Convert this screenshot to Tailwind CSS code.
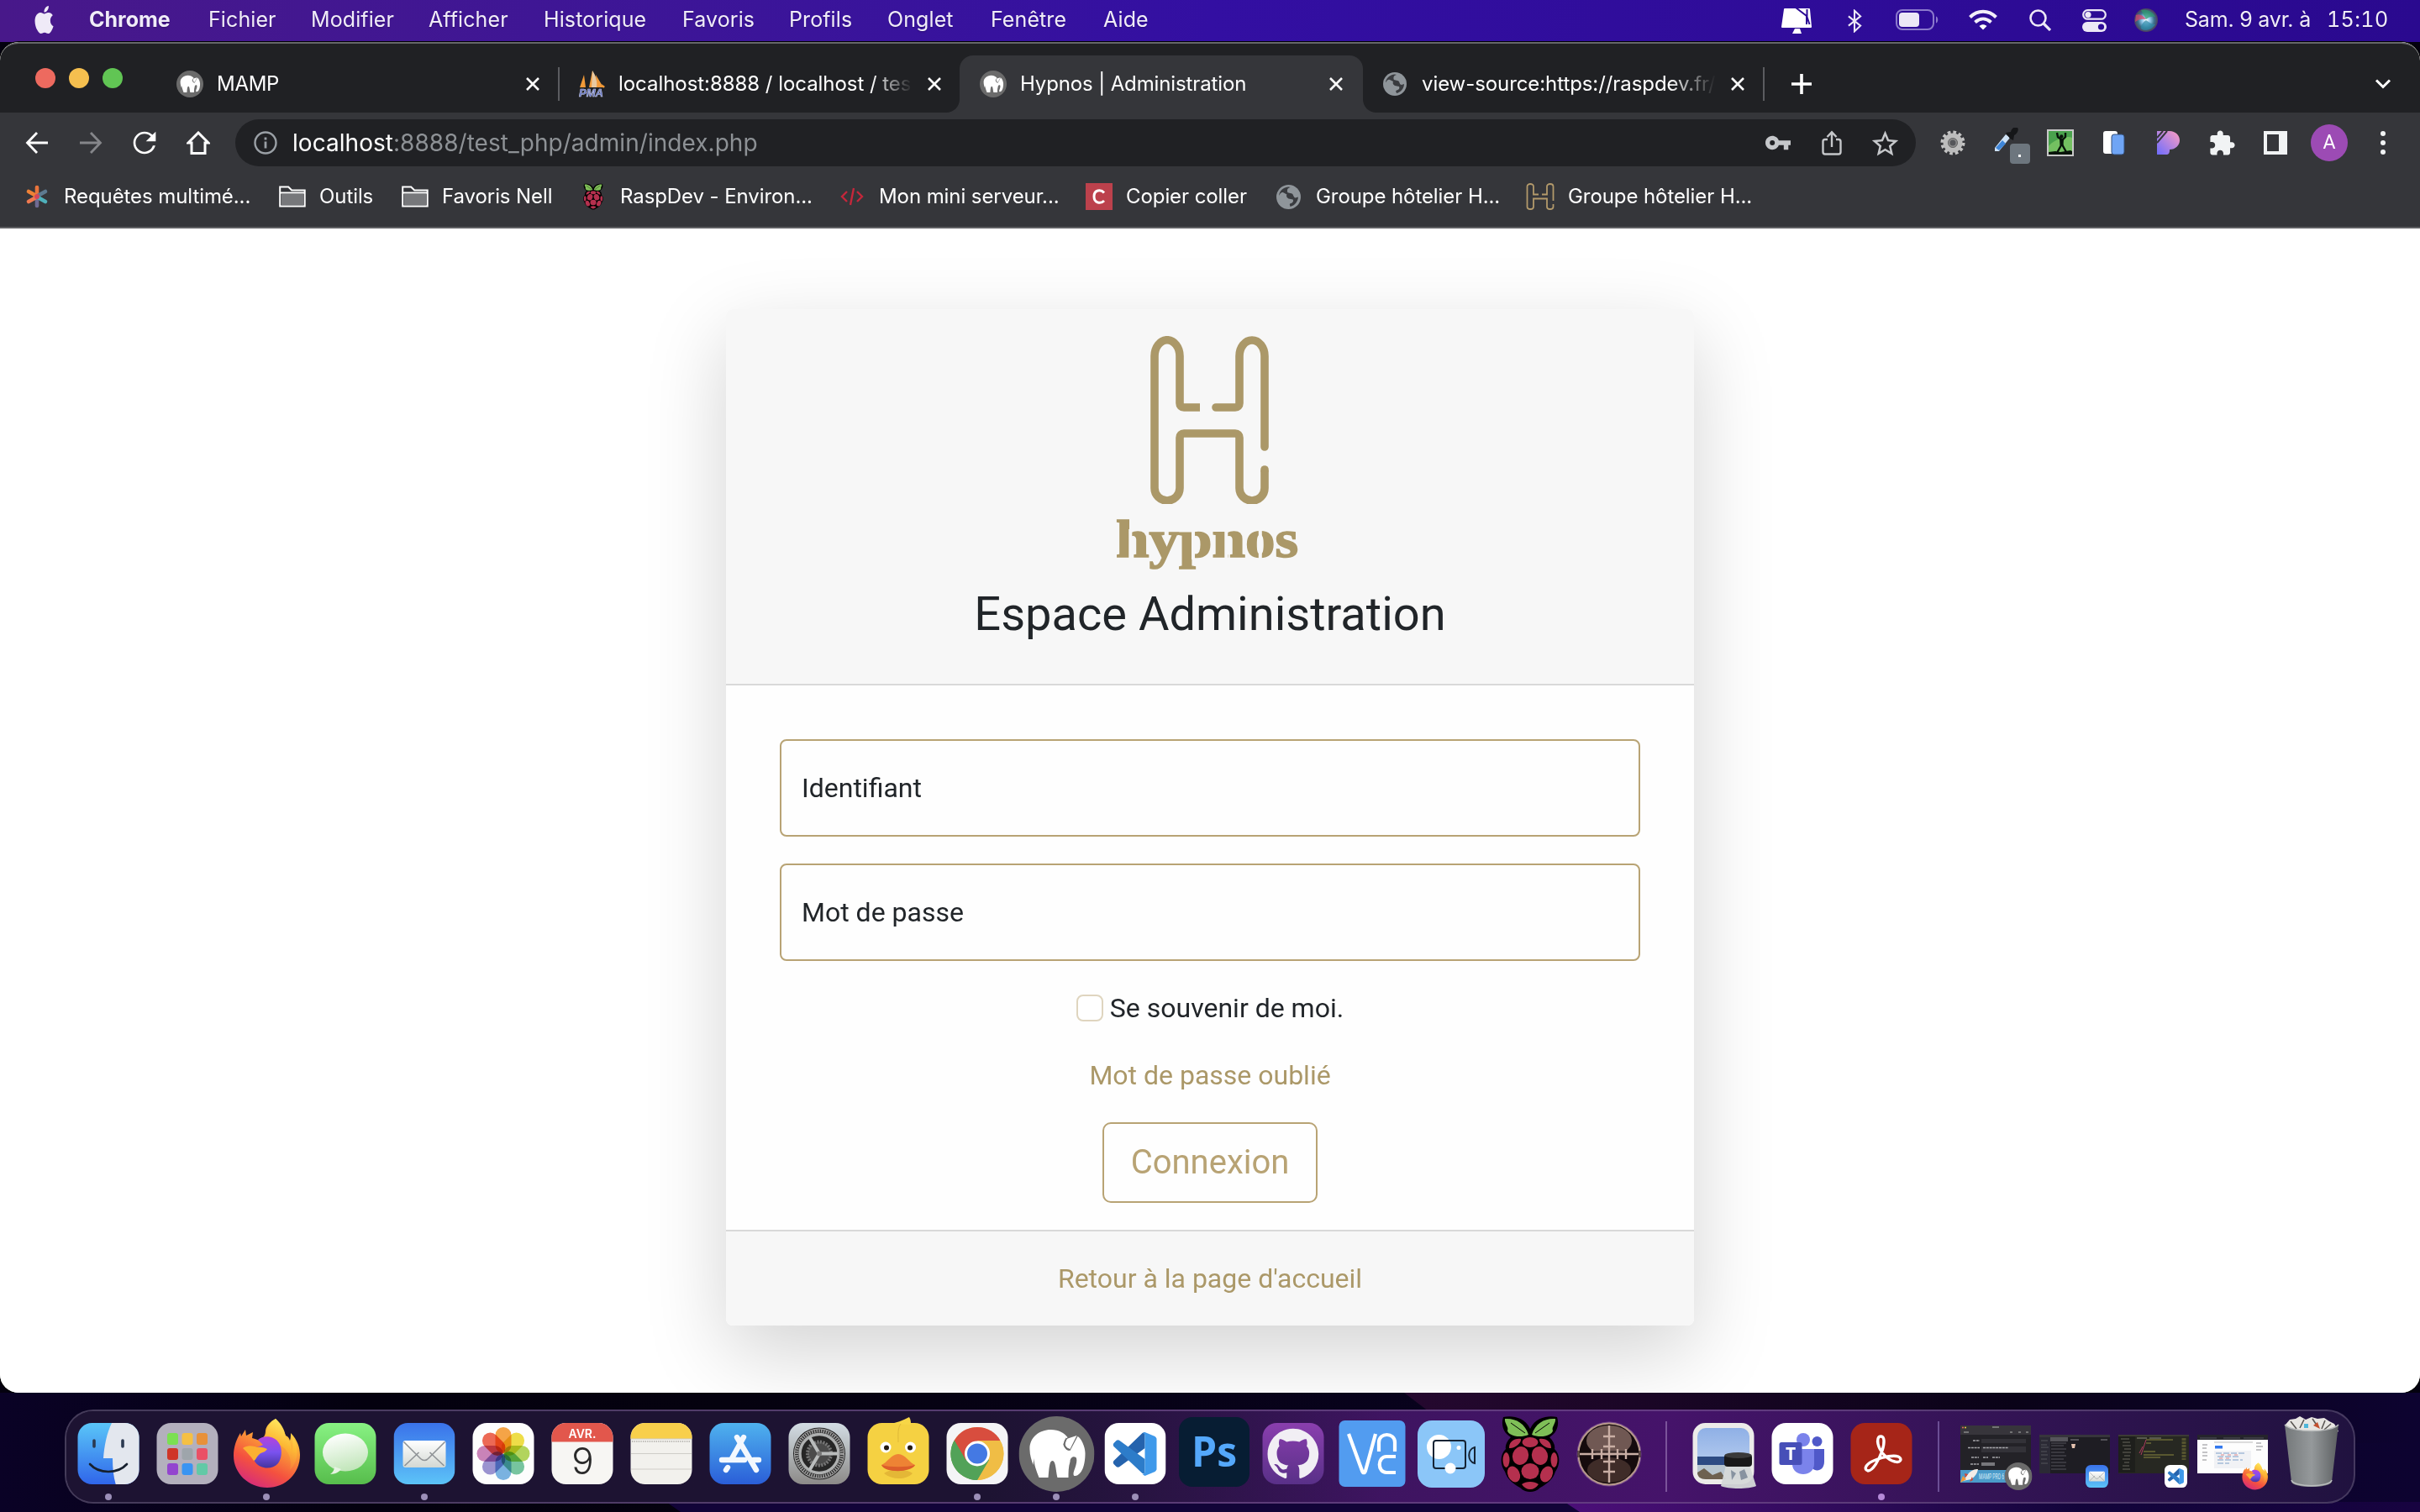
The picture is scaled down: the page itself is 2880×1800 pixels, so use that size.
<!DOCTYPE html>
<html lang="fr">
<head>
<meta charset="utf-8">
<title>Hypnos | Administration</title>
<script src="https://cdn.jsdelivr.net/npm/@tailwindcss/browser@4"></script>
</head>
<body class="w-[2880px] h-[1800px] overflow-hidden bg-[#04010f] font-['Inter','Liberation_Sans',sans-serif]">

<svg class="absolute size-0">
  <defs>
    <linearGradient id="gBlue" x1="0" y1="0" x2="0" y2="1"><stop offset="0" stop-color="#5ac6f8"/><stop offset="1" stop-color="#2f64ea"/></linearGradient>
    <linearGradient id="gMail" x1="0" y1="0" x2="0" y2="1"><stop offset="0" stop-color="#3a72ea"/><stop offset="1" stop-color="#5cc3f8"/></linearGradient>
    <linearGradient id="gStore" x1="0" y1="0" x2="0" y2="1"><stop offset="0" stop-color="#4fb2ee"/><stop offset="1" stop-color="#2a5ed8"/></linearGradient>
    <linearGradient id="gGreen" x1="0" y1="0" x2="0" y2="1"><stop offset="0" stop-color="#88f283"/><stop offset="1" stop-color="#57bd4c"/></linearGradient>
    <linearGradient id="gWhite" x1="0" y1="0" x2="0" y2="1"><stop offset="0" stop-color="#ffffff"/><stop offset="1" stop-color="#d3d8d3"/></linearGradient>
    <linearGradient id="gBubble" x1=".3" y1="0" x2=".6" y2="1"><stop offset="0" stop-color="#ffffff"/><stop offset="1" stop-color="#c0e5b8"/></linearGradient>
    <linearGradient id="gGit" x1="0" y1="0" x2="0" y2="1"><stop offset="0" stop-color="#8a3fae"/><stop offset="1" stop-color="#593088"/></linearGradient>
    <linearGradient id="gGrey" x1="0" y1="0" x2="0" y2="1"><stop offset="0" stop-color="#d3dde4"/><stop offset="1" stop-color="#8c8a88"/></linearGradient>
    <linearGradient id="gFox" x1=".8" y1="0" x2=".3" y2="1"><stop offset="0" stop-color="#fff04f"/><stop offset=".35" stop-color="#fba236"/><stop offset=".7" stop-color="#f4513f"/><stop offset="1" stop-color="#d62b7c"/></linearGradient>
    <linearGradient id="gFox2" x1=".7" y1="0" x2=".4" y2="1"><stop offset="0" stop-color="#fff36b"/><stop offset=".5" stop-color="#fdbb35"/><stop offset="1" stop-color="#f5703b"/></linearGradient>
    <linearGradient id="gOrb" x1="0" y1="0" x2="0" y2="1"><stop offset="0" stop-color="#b443dc"/><stop offset=".5" stop-color="#7a52ef"/><stop offset="1" stop-color="#45349f"/></linearGradient>
    <linearGradient id="gBin" x1="0" y1="0" x2="1" y2="0"><stop offset="0" stop-color="#74787a"/><stop offset=".5" stop-color="#95999b"/><stop offset="1" stop-color="#5c5f61"/></linearGradient>
    <linearGradient id="gP" x1="1" y1="0" x2="0" y2="1"><stop offset="0" stop-color="#ff9ec0"/><stop offset="1" stop-color="#6c6cff"/></linearGradient>
    <radialGradient id="gSiri"><stop offset="0" stop-color="#ffffff"/><stop offset=".35" stop-color="#8fc7ea"/><stop offset=".7" stop-color="#3a6f8c"/><stop offset="1" stop-color="#4d3f5e"/></radialGradient>
    <linearGradient id="gSky" x1="0" y1="0" x2="0" y2="1"><stop offset="0" stop-color="#8fb0e6"/><stop offset="1" stop-color="#c3d6f2"/></linearGradient>
  </defs>
  <symbol id="elephant" viewBox="0 0 90 90">
    <circle cx="45" cy="45" r="45" fill="#6b6b6b"/>
    <path fill="#fff" d="M13 40C12 26 24 16 38 16c10 0 16 4 20 9l-5 8c0 4 4 7 8 8l9-17c4 2 9 12 9 20 0 14-4 26-12 27-3 0-2-4-1-7 2-5 4-12 2-15-4-2-7 1-7 5-2 6-2 13-2 19H46c-2-8-2-20-6-20s-4 11-5 20H24c-3-8-6-15-6-23l-1 8c-2-6-4-12-4-18zM57 27l12-4-8 16c-4-1-6-3-6-6z"/>
    <path d="M57 26c-3 4-4 7-2 10 1 2 3 4 5 4" fill="none" stroke="#6b6b6b" stroke-width="1.800"/>
  </symbol>
  <symbol id="globe" viewBox="0 0 28 28">
    <circle cx="14" cy="14" r="14" fill="#8f959a"/>
    <path fill="#35363a" d="M16 3c-4 1-4 4-3 6l4 1c3 0 2 5 5 5l3-1c0 5-4 10-9 11l-1-3c4-1 5-3 4-5l-5-1c-2-1-3-3-2-5L8 9c-2-1-4 1-5 4C3 7 8 3 14 2.500z" opacity=".95"/>
    <path fill="#8f959a" d="M3 12l8 2 1 4 4 2-2 5C7 25 2 19 3 12z"/>
  </symbol>
  <symbol id="folder" viewBox="0 0 32 26">
    <path d="M1.200 24.500V1.500h10l4 4h15.500v19z" fill="none" stroke="#fff" stroke-width="2"/><path d="M3 10h26v13H3z" fill="#77787b"/><path d="M2 8.500h28" stroke="#fff" stroke-width="2"/>
  </symbol>
  <symbol id="cross" viewBox="0 0 16 16"><path d="M1 1l14 14M15 1L1 15" stroke="#fff" stroke-width="2.600" fill="none"/></symbol>
  <symbol id="pi" viewBox="0 0 70 90">
    <path fill="#000" d="M3 1C12-1 28 0 35 15 42 0 58-1 67 1c3 9 0 19-9 24 5 5 7 10 6 14 7 6 7 19 1 27-3 10-11 15-18 19-4 4-8 5-12 5s-8-1-12-5C16 81 8 76 5 66-1 58-1 45 6 39c-1-4 1-9 6-14C3 20 0 10 3 1z"/>
    <path fill="#7fbf57" d="M5 3c12-1 24 5 28 19-12 5-25 0-25-5 2-4-4-9-3-14zM65 3C53 2 41 8 37 22c12 5 25 0 25-5-2-4 4-9 3-14z"/>
    <path d="M12 8l17 12M58 8L41 20" stroke="#000" stroke-width="1"/>
    <g fill="#b5304e"><ellipse cx="35" cy="31" rx="9.500" ry="6"/><path d="M10 38c0-8 6-12 14-11 1 5-8 12-14 11zM60 38c0-8-6-12-14-11-1 5 8 12 14 11z"/><ellipse cx="23.500" cy="47" rx="9.500" ry="11" transform="rotate(18 23.500 47)"/><ellipse cx="46.500" cy="47" rx="9.500" ry="11" transform="rotate(-18 46.500 47)"/><ellipse cx="6.500" cy="52" rx="4" ry="9"/><ellipse cx="63.500" cy="52" rx="4" ry="9"/><ellipse cx="35" cy="65.500" rx="10.500" ry="9.500"/><ellipse cx="15.500" cy="69" rx="7" ry="10" transform="rotate(-25 15.500 69)"/><ellipse cx="54.500" cy="69" rx="7" ry="10" transform="rotate(25 54.500 69)"/><path d="M25 81c5-4 15-4 20 0-3 4-6 6-10 6s-7-2-10-6z"/></g>
  </symbol>
  <symbol id="mail" viewBox="0 0 73 73">
    <rect width="73" height="73" rx="17" fill="url(#gMail)"/>
    <rect x="11" y="21" width="51" height="32" rx="3" fill="url(#gWhite)"/>
    <path d="M13 51l17-16M60 51L43 35M12 22.500l20 20q4.500 4 9 0l20-20" fill="none" stroke="#8f9396" stroke-width="1.600"/>
  </symbol>
  <symbol id="vscode" viewBox="0 0 73 73">
    <rect width="73" height="73" rx="17" fill="#fff"/>
    <path d="M11 45l34-33 3-1v19L18 52c-1 1-3 1-4 0l-3-3c-1-1-1-3 0-4z" fill="#2563ad"/>
    <path d="M11 28c-1-1-1-3 0-4l3-3c1-1 3-1 4 0l30 22v18l-3-1z" fill="#2d7cc9"/>
    <path d="M48 11l12 5c1 1 2 2 2 3v36c0 1-1 2-2 3l-12 5-3-2c2 0 3-1 3-2V15c0-1-1-3-3-3z" fill="#3f99ea"/>
  </symbol>
  <symbol id="firefox" viewBox="0 0 80 82">
    <path fill="url(#gFox)" d="M51 0c6 6 9 12 12 20 3 1 4 3 5 6 1-3 1-6 1-9 8 8 11 18 11 26 0 22-17 39-39 39S1 65 1 44c0-10 3-19 8-27l1 4 5-8 1 7 8-4-1 7c4 1 6 2 9 3 5-4 7-6 7-12 1-6 6-11 12-14z"/>
    <path fill="url(#gFox2)" d="M51 0c9 8 11 15 12 22 5 4 7 9 7 16 2-4 2-11 0-19 9 15 9 31-2 42 3-14-2-24-12-30-3-4-9-7-17-8 1-9 3-17 12-23z" opacity=".9"/>
    <path fill="url(#gOrb)" d="M30 25c6-6 20-5 25 4 4 6 4 17-1 24-7 8-21 7-27-1-5-7-3-13 0-17l9-4z"/>
    <path fill="#fbb032" d="M12 35c5-4 12-3 17-1 6-1 9 1 12 2-2 4-7 4-9 6-4 3-4 7-7 8-4-6-8-10-13-15z"/>
  </symbol>
  <symbol id="siteH" viewBox="0 0 142 200">
    <path d="M59 85H40c-3 0-5-2-5-5V24a14.800 19 0 0 0-30 0v157a14.800 14.800 0 0 0 30 0V121c0-3 2-5 5-5h61c3 0 5 2 5 5v60a15 15 0 0 0 30 0v-21" fill="none" stroke="currentColor" stroke-width="9.600"/>
    <path d="M78 85h23c3 0 5-2 5-5V24a15 19 0 0 1 30 0v108" fill="none" stroke="currentColor" stroke-width="9.600" stroke-linecap="round"/>
    <path d="M136 160v-1" stroke="currentColor" stroke-width="9.600" stroke-linecap="round"/>
  </symbol>
</svg>

<div class="relative flex flex-col w-[2880px] h-[1800px]">

<!-- Menu bar -->
<header class="h-[50px] flex-none flex items-center bg-linear-to-r from-[#48188a] via-[#330fa2] to-[#2a098f] text-[#f0ecf8] text-[25px] leading-none whitespace-nowrap pb-[4px] text-shadow-sm">
  <svg class="ml-[39px] w-[27px] h-[33px] flex-none" viewBox="0 0 24 24" preserveAspectRatio="none" fill="#efeaf7"><path d="M12.152 6.896c-.948 0-2.415-1.078-3.960-1.040-2.040.027-3.910 1.183-4.961 3.014-2.117 3.675-.546 9.103 1.519 12.090 1.013 1.454 2.208 3.090 3.792 3.039 1.520-.065 2.090-.987 3.935-.987 1.831 0 2.350.987 3.960.948 1.637-.026 2.676-1.480 3.676-2.948 1.156-1.688 1.636-3.325 1.662-3.415-.039-.013-3.182-1.221-3.220-4.857-.026-3.040 2.480-4.494 2.597-4.559-1.429-2.090-3.623-2.324-4.390-2.376-2-.156-3.675 1.090-4.610 1.090zM15.530 3.830c.843-1.012 1.400-2.427 1.245-3.830-1.207.052-2.662.805-3.532 1.818-.780.896-1.454 2.338-1.273 3.714 1.338.104 2.715-.688 3.559-1.701"/></svg>
  <nav class="flex items-center ml-[40px] tracking-[0.100px]">
    <span class="w-[142px] font-bold tracking-[0px]">Chrome</span>
    <span class="w-[122px]">Fichier</span>
    <span class="w-[140px]">Modifier</span>
    <span class="w-[137px]">Afficher</span>
    <span class="w-[165px]">Historique</span>
    <span class="w-[127px]">Favoris</span>
    <span class="w-[117px]">Profils</span>
    <span class="w-[123px]">Onglet</span>
    <span class="w-[134px]">Fenêtre</span>
    <span class="w-[60px]">Aide</span>
  </nav>
  <div class="ml-auto flex items-center mr-[38px]">
    <svg class="w-[38px] h-[32px] mt-[4px]" viewBox="0 0 38 32"><path d="M5 1h29q1 0 1 1l2 21q0 1-1 1H2q-1 0-1-1L4 2q0-1 1-1z" fill="#fff"/><path d="M18 0l13 10v10M31.500 2v9l3 9" stroke="#2c0b96" stroke-width="2" fill="none"/><path d="M17 25h6l2 6H14z" fill="#fff"/></svg>
    <svg class="ml-[41px] mt-[4px] w-[18px] h-[28px]" viewBox="0 0 19 28" fill="none" stroke="#ece8f6" stroke-width="2.200"><path d="M2 8l15 12-7.500 7V1L17 8 2 20"/></svg>
    <svg class="ml-[40px] mt-[2px] w-[52px] h-[26px]" viewBox="0 0 52 26"><rect x="1" y="1" width="44" height="23" rx="7" fill="none" stroke="#8b79cc" stroke-width="2"/><rect x="4" y="4" width="24" height="17" rx="4" fill="#ece8f6"/><path d="M48 8.500c3 1 3 7 0 8z" fill="#8b79cc"/></svg>
    <svg class="ml-[35px] w-[34px] h-[25px]" viewBox="0 0 34 25" fill="none" stroke="#f2eef9" stroke-width="4"><path d="M1.500 9.500c9-9 22-9 31 0M7.500 15.500c6-5.500 13-5.500 19 0"/><path d="M12.500 20c3-2.500 6-2.500 9 0L17 24.500z" fill="#fff" stroke="none"/></svg>
    <svg class="ml-[38px] mt-[2px] w-[26px] h-[26px]" viewBox="0 0 26 26" fill="none" stroke="#ece8f6" stroke-width="2.600"><circle cx="10.500" cy="10.500" r="9"/><path d="M17 17l8 8" stroke-width="3.200"/></svg>
    <svg class="ml-[37px] mt-[3px] w-[29px] h-[27px]" viewBox="0 0 29 27"><rect x="1.200" y="1.200" width="26.600" height="10.500" rx="5.250" fill="none" stroke="#ece8f6" stroke-width="2.200"/><circle cx="7" cy="6.500" r="3.600" fill="#ece8f6"/><rect y="15" width="29" height="12" rx="6" fill="#ece8f6"/><circle cx="22.500" cy="21" r="3.600" fill="#2c0b96"/></svg>
    <svg class="ml-[33px] mt-[2px] w-[28px] h-[28px]" viewBox="0 0 28 28"><circle cx="14" cy="14" r="14" fill="url(#gSiri)"/><path d="M2 8c5-2 9 1 12 5-5-1-9 0-13 3z" fill="#d5456a" opacity=".75"/><path d="M8 2c7-2 14 2 17 8-4-1-8 0-11 3z" fill="#2f9c6c" opacity=".7"/><path d="M8 24c0-5 3-8 6-10 4 3 7 5 11 5-4 6-12 9-17 5z" fill="#2f8ca8" opacity=".7"/></svg>
    <span class="ml-[32px] w-[169px] tracking-[-0.200px]">Sam. 9 avr. à</span><span class="w-[73px] tabular-nums tracking-[0.400px]">15:10</span>
  </div>
</header>

<!-- Browser window -->
<main class="h-[1608px] flex-none rounded-[22px] overflow-hidden bg-white flex flex-col ring-1 ring-black">
  <!-- Tab strip -->
  <div class="h-[84px] flex-none bg-[#202124] border-t-2 border-[#66676a] rounded-t-[22px] flex text-white text-[24px] leading-none whitespace-nowrap">
    <div class="w-[166px] pl-[42px] pt-[29px] flex gap-[16px]">
      <i class="size-[24px] rounded-full bg-[#ed6a5f]"></i><i class="size-[24px] rounded-full bg-[#f5bf4f]"></i><i class="size-[24px] rounded-full bg-[#61c554]"></i>
    </div>
    <div class="w-[500px] flex items-center pl-[44px] pt-[14px]">
      <svg class="size-[32px]"><use href="#elephant"/></svg><span class="ml-[16px] w-[368px] tracking-[-0.300px]">MAMP</span><svg class="size-[16px]"><use href="#cross"/></svg><i class="ml-[22px] w-[2px] h-[40px] bg-[#5b5c60]"></i>
    </div>
    <div class="w-[476px] flex items-center pl-[22px] pt-[14px]">
      <svg class="w-[32px] h-[32px]" viewBox="0 0 32 32"><path d="M7 5l2 15H2zM17 0l-4 20h9zM21 5l9 15h-8zM28 16l4 3-2 2z" fill="#f29a38"/><path d="M17 0c4 6 6 12 5 20h-6z" fill="#e9c9a0"/><text x="1" y="31" font-size="12" font-weight="bold" font-style="italic" textLength="29" lengthAdjust="spacingAndGlyphs" font-family="Liberation Sans" fill="#5a6cc0" stroke="#d8daf2" stroke-width=".5">PMA</text></svg>
      <span class="ml-[16px] w-[350px] mask-r-from-86% py-1 tracking-[-0.050px]">localhost:8888 / localhost / tes</span><svg class="ml-[18px] size-[16px]"><use href="#cross"/></svg>
    </div>
    <div class="relative w-[480px] mt-[14px] bg-[#35363a] rounded-t-[16px] flex items-center pl-[24px]">
      <svg class="absolute -left-[16px] bottom-0 size-[16px]" viewBox="0 0 16 16"><path d="M16 0v16H0C9 16 16 9 16 0z" fill="#35363a"/></svg>
      <svg class="absolute -right-[16px] bottom-0 size-[16px]" viewBox="0 0 16 16"><path d="M0 0v16h16C7 16 0 9 0 0z" fill="#35363a"/></svg>
      <svg class="size-[32px]"><use href="#elephant"/></svg><span class="ml-[16px] w-[368px] tracking-[-0.130px]">Hypnos | Administration</span><svg class="size-[16px]"><use href="#cross"/></svg>
    </div>
    <div class="w-[479px] flex items-center pl-[24px] pt-[14px]">
      <svg class="size-[28px]"><use href="#globe"/></svg><span class="ml-[18px] w-[350px] mask-r-from-84% py-1 tracking-[-0.080px]">view-source:https://raspdev.fr/</span><svg class="ml-[18px] size-[16px]"><use href="#cross"/></svg><i class="ml-[22px] w-[2px] h-[40px] bg-[#5b5c60]"></i>
    </div>
    <div class="flex-1 flex items-center pl-[31px] pt-[14px] pr-[34px] justify-between">
      <svg class="size-[24px]" viewBox="0 0 24 24"><path d="M12 0v24M0 12h24" stroke="#fff" stroke-width="3.600"/></svg>
      <svg class="w-[20px] h-[12px]" viewBox="0 0 20 12" fill="none" stroke="#fff" stroke-width="3"><path d="M2 1.500l8 8 8-8"/></svg>
    </div>
  </div>
  <!-- Toolbar -->
  <div class="h-[72px] flex-none bg-[#35363a] flex items-center">
    <svg class="ml-[30px] w-[28px] h-[28px]" viewBox="0 0 28 28" fill="none" stroke="#fff" stroke-width="2.800"><path d="M27 14H3M14 2L2.500 14 14 26"/></svg>
    <svg class="ml-[36px] w-[28px] h-[28px]" viewBox="0 0 28 28" fill="none" stroke="#85868a" stroke-width="2.800"><path d="M1 14h24M14 2l11.500 12L14 26"/></svg>
    <svg class="ml-[30px] w-[40px] h-[40px]" viewBox="0 0 24 24" fill="#fff"><path d="M17.650 6.350C16.200 4.900 14.210 4 12 4c-4.420 0-7.990 3.580-7.990 8s3.570 8 7.990 8c3.730 0 6.840-2.550 7.730-6h-1.800c-.82 2.500-3.200 4.400-5.930 4.400-3.500 0-6.400-2.900-6.400-6.400s2.900-6.400 6.400-6.400c1.800 0 3.300.75 4.500 1.900L13 11h7V4z"/></svg>
    <svg class="ml-[30px] w-[28px] h-[28px]" viewBox="0 0 28 28" fill="none" stroke="#fff" stroke-width="3"><path d="M6 26.500V14H2L14 2l12 12h-4v12.500z"/></svg>
    <div class="ml-[30px] w-[2000px] h-[56px] rounded-full bg-[#202124] flex items-center pl-[22px] text-[28px] leading-none">
      <svg class="size-[28px]" viewBox="0 0 28 28"><circle cx="14" cy="14" r="12.500" fill="none" stroke="#9aa0a6" stroke-width="2.400"/><path d="M14 12.500v8M14 7.500v3" stroke="#9aa0a6" stroke-width="2.800"/></svg>
      <span class="ml-[18px] text-white tracking-[0.040px]">localhost<span class="text-[#8d9195]">:8888/test_php/admin/index.php</span></span>
      <svg class="ml-auto w-[30px] h-[18px]" viewBox="0 0 22 12" fill="#c5c7ca"><path d="M11.650 4C10.830 1.670 8.610 0 6 0 2.690 0 0 2.690 0 6s2.690 6 6 6c2.610 0 4.830-1.670 5.650-4H16v4h4V8h2V4zM6 8.200a2.200 2.200 0 1 1 0-4.400 2.200 2.200 0 0 1 0 4.400z"/></svg>
      <svg class="ml-[37px] w-[24px] h-[30px]" viewBox="0 0 24 30" fill="none" stroke="#c5c7ca" stroke-width="2.400"><path d="M7 11H4q-2.500 0-2.500 2.500V26q0 2.500 2.500 2.500h16q2.500 0 2.500-2.500V13.500Q22.500 11 20 11h-3M12 20V2.500M6.500 8L12 2.300 17.500 8"/></svg>
      <svg class="ml-[35px] mr-[20px] w-[33px] h-[33px]" viewBox="1.500 1 21 21" fill="#c5c7ca"><path d="M22 9.240l-7.190-.62L12 2 9.190 8.630 2 9.240l5.460 4.730L5.820 21 12 17.270 18.180 21l-1.630-7.030L22 9.240zM12 15.400l-3.760 2.270 1-4.280-3.320-2.880 4.380-.38L12 6.100l1.710 4.040 4.380.38-3.320 2.880 1 4.280L12 15.400z"/></svg>
    </div>
    <svg class="ml-[29px] size-[30px]" viewBox="0 0 30 30"><circle cx="15" cy="15" r="12.500" fill="none" stroke="#c4c4c4" stroke-width="4" stroke-dasharray="3.600 2.945"/><circle cx="15" cy="15" r="8.500" fill="none" stroke="#bcbcbc" stroke-width="6"/><circle cx="15" cy="15" r="5.500" fill="#8d8d8d" stroke="#666" stroke-width="1"/><circle cx="15" cy="15" r="3.500" fill="#55565a"/></svg>
    <svg class="ml-[34px] w-[46px] h-[46px] mt-[10px]" viewBox="0 0 46 46"><path d="M1 24L14 8l5 4L6 28H1z" fill="#cfe2f5"/><path d="M2 24l8-9 4 4-8 8z" fill="#3f86d8"/><path d="M14 6l6-1c1-5 6-7 8-5s0 7-4 9l-1 6-4-2z" fill="#151618"/><rect x="19" y="19" width="24" height="24" rx="4" fill="#6d767e"/><rect x="29" y="32" width="3" height="3" fill="#fff"/></svg>
    <svg class="ml-[17px] w-[32px] h-[32px]" viewBox="0 0 32 32"><rect width="32" height="32" fill="#c8c8c8"/><rect x="2" y="2" width="28" height="28" fill="#4aa24d"/><path d="M2 20C6 14 22 6 30 10v18H2z" fill="#74c061"/><circle cx="17.300" cy="8.500" r="2.200" fill="#08140a"/><path d="M12 4l1 5 4 3h2l3-3V4M17.500 11v8M17.500 18l-5 9M18 18l5 9" fill="none" stroke="#08140a" stroke-width="2.400"/><path d="M15 11h5l-.5 8h-4z" fill="#08140a"/><path d="M2 27l8-1 6 1 12-2 2 1v4H2z" fill="#08140a"/></svg>
    <svg class="ml-[35px] w-[26px] h-[30px]" viewBox="0 0 26 30"><rect y="1" width="17" height="27" rx="3" fill="#fff"/><rect x="10" y="5" width="15" height="24" rx="3" fill="#6fa5f5" stroke="#35507a" stroke-width="1"/></svg>
    <svg class="ml-[38px] w-[28px] h-[28px]" viewBox="0 0 28 28"><path d="M0 0h15c7 0 12 5 12 11s-5 11-12 11v1c0 3-1 5-4 5H0z" fill="url(#gP)"/><path d="M0 8L7 0M0 14L12 0" stroke="#35363a" stroke-width="2"/></svg>
    <svg class="ml-[34px] w-[32px] h-[32px]" viewBox="1 0 23 23" fill="#f1f3f4"><path d="M20.500 11H19V7c0-1.100-.9-2-2-2h-4V3.500C13 2.120 11.880 1 10.500 1S8 2.120 8 3.500V5H4c-1.100 0-1.990.9-1.990 2v3.800H3.500c1.490 0 2.700 1.210 2.700 2.700s-1.210 2.700-2.700 2.700H2V20c0 1.100.9 2 2 2h3.800v-1.500c0-1.490 1.210-2.700 2.700-2.700 1.490 0 2.700 1.210 2.700 2.700V22H17c1.100 0 2-.9 2-2v-4h1.500c1.380 0 2.500-1.120 2.500-2.500S21.880 11 20.500 11z"/></svg>
    <svg class="ml-[33px] w-[28px] h-[28px]" viewBox="0 0 28 28"><path d="M0 0h28v28H0zM4 4v20h14V4z" fill="#f1f3f4" fill-rule="evenodd"/></svg>
    <span class="ml-[28px] size-[44px] rounded-full bg-[#9c4bb4] text-white text-[23px] flex items-center justify-center font-['Roboto',sans-serif]">A</span>
    <svg class="ml-[39px] w-[6px] h-[28px]" viewBox="0 0 6 28" fill="#f1f3f4"><circle cx="3" cy="3" r="3"/><circle cx="3" cy="14" r="3"/><circle cx="3" cy="25" r="3"/></svg>
  </div>
  <!-- Bookmarks bar -->
  <div class="h-[66px] flex-none bg-[#35363a] border-b-2 border-[#5f6063] flex items-center text-white text-[24px] leading-none whitespace-nowrap pb-[8px] tracking-[-0.080px]">
    <svg class="ml-[30px] size-[28px]" viewBox="0 0 28 28" stroke-width="4.600" stroke-linecap="round"><path d="M14 14V3" stroke="#e8743c"/><path d="M14 14v11" stroke="#6f6b93"/><path d="M13 13L4 8" stroke="#ee8136"/><path d="M13 15l-9 5" stroke="#ef7a50"/><path d="M15 13l9-5" stroke="#5d7a90"/><path d="M15 15l9 5" stroke="#4fb0ba"/><circle cx="14" cy="14" r="3" fill="#d6455a"/></svg>
    <span class="ml-[18px] w-[256px]">Requêtes multimé...</span>
    <svg class="w-[32px] h-[26px]"><use href="#folder"/></svg><span class="ml-[16px] w-[98px]">Outils</span>
    <svg class="w-[32px] h-[26px]"><use href="#folder"/></svg><span class="ml-[16px] w-[168px]">Favoris Nell</span>
    <svg class="w-[24px] h-[32px]"><use href="#pi"/></svg><span class="ml-[20px] w-[262px]">RaspDev - Environ...</span>
    <svg class="w-[28px] h-[22px]" viewBox="0 0 28 22" fill="none" stroke="#c4273b" stroke-width="2.400"><path d="M8 5l-6 6 6 6M20 5l6 6-6 6M16 1l-4 20"/></svg><span class="ml-[18px] w-[246px]">Mon mini serveur...</span>
    <svg class="w-[32px] h-[32px]" viewBox="0 0 32 32"><rect width="32" height="32" fill="#bc414c"/><path d="M22 11.500C18 7 10 8 10 16s8 9 12 5" fill="none" stroke="#fff" stroke-width="3"/></svg><span class="ml-[16px] w-[179px]">Copier coller</span>
    <svg class="size-[29px]"><use href="#globe"/></svg><span class="ml-[18px] w-[250px]">Groupe hôtelier H...</span>
    <svg class="w-[34px] h-[32px] text-[#b39a6b]" viewBox="0 0 34 32" fill="none" stroke="currentColor" stroke-width="1.800"><path d="M15 13.500H9V4C9 0 1.500 0 1.500 4v24c0 4 7.500 4 7.500 0v-9.500h16V28c0 4 7.500 4 7.500 0v-3M19 13.500h6V4c0-4 7.500-4 7.500 0v17"/></svg><span class="ml-[16px]">Groupe hôtelier H...</span>
  </div>
  <!-- Page -->
  <section class="flex-1 bg-white flex justify-center items-start pt-[96px] overflow-hidden font-['Roboto',sans-serif] text-[32px] leading-[48px] text-[#212529]">
    <form class="w-[1152px] rounded-[8px] bg-[#fefefe] shadow-[0_32px_96px_rgba(0,0,0,0.175)] flex flex-col">
      <div class="h-[448px] bg-[#f7f7f7] border-b-2 border-[#d9d9d9] rounded-t-[8px] pt-[32px] flex flex-col items-center">
        <svg class="w-[142px] h-[200px] text-[#ab9868]"><use href="#siteH"/></svg>
        <svg class="w-[240px] h-[80px] mt-[8px]" viewBox="0 0 240 80"><text x="8" y="55" font-family="Liberation Serif" font-weight="bold" font-size="64" textLength="217" lengthAdjust="spacingAndGlyphs" fill="#ab9868" stroke="#ab9868" stroke-width="1.600">hypnos</text><path d="M25.300 22v35M100 22v36M139.300 22v35M179.800 22v36" stroke="#f7f7f7" stroke-width="4" fill="none"/></svg>
        <h1 class="mt-[10px] text-[56px] leading-[67px]">Espace Administration</h1>
      </div>
      <div class="px-[64px] pt-[64px] pb-[32px] flex flex-col items-center gap-[32px]">
        <label class="w-full h-[116px] border-2 border-[#b8a374] rounded-[8px] flex items-center pl-[24px]">Identifiant</label>
        <label class="w-full h-[116px] border-2 border-[#b8a374] rounded-[8px] flex items-center pl-[24px]">Mot de passe</label>
        <label class="flex items-center gap-[8px]"><i class="size-[32px] rounded-[8px] border-2 border-[#dfd5bf] bg-white"></i>Se souvenir de moi.</label>
        <a class="text-[#ab9868]">Mot de passe oublié</a>
        <button type="button" class="w-[256px] h-[96px] border-2 border-[#b8a374] rounded-[10px] text-[40px] text-[#b8a374]">Connexion</button>
      </div>
      <div class="h-[114px] bg-[#f7f7f7] border-t-2 border-[#d9d9d9] rounded-b-[8px] flex items-center justify-center text-[#ab9868]">Retour à la page d'accueil</div>
    </form>
  </section>
</main>

<!-- Desktop and dock -->
<footer class="relative flex-1 flex justify-center pt-[20px]">
  <svg class="absolute inset-0 w-full h-full" viewBox="0 0 2880 142" preserveAspectRatio="none">
    <defs>
      <linearGradient id="w1"><stop offset="0" stop-color="#0a0226"/><stop offset=".15" stop-color="#04010f"/><stop offset=".3" stop-color="#05020f"/><stop offset="1" stop-color="#0d0330"/></linearGradient>
      <linearGradient id="w2"><stop offset="0" stop-color="#25082f"/><stop offset=".6" stop-color="#0a0318"/><stop offset="1" stop-color="#0d0330"/></linearGradient>
      <linearGradient id="w3"><stop offset="0" stop-color="#4c0f79"/><stop offset=".35" stop-color="#2d0a58"/><stop offset=".6" stop-color="#12043a"/><stop offset="1" stop-color="#170340"/></linearGradient>
    </defs>
    <rect width="2880" height="142" fill="url(#w1)"/>
    <path d="M790 128h1100v14H810z" fill="#120438"/>
    <path d="M1671 0h1209v60H1750z" fill="url(#w2)"/>
    <path d="M1862 130h1018v12H1880z" fill="url(#w3)"/>
  </svg>
  <div class="relative w-[2726px] h-[112px] px-[5px] flex rounded-[34px] bg-linear-to-r from-[#1f1438] from-0% via-[#45136a] via-70% to-[#20123f] to-100% shadow-[inset_0_0_0_2px_rgba(255,255,255,0.17)]">
    <div class="absolute inset-[2px] right-[1160px] rounded-l-[32px] bg-linear-to-r from-[#1d1332] from-70% to-[#28134b]/0"></div>
    <div class="relative flex [&>svg]:w-[94px] [&>svg]:h-[112px] [&>svg]:flex-none [&>svg]:overflow-visible">
    <!-- Finder -->
    <svg viewBox="0 0 94 112"><clipPath id="sq"><rect x="10.500" y="16" width="73" height="73" rx="17"/></clipPath><g clip-path="url(#sq)"><rect x="10" y="16" width="74" height="74" fill="url(#gBlue)"/><path d="M51 16c-6 12-9 28-10 42h11c0 12 1 22 4 32h30V16z" fill="#e3e7ee"/></g><path d="M30 37v7M64 37v7" stroke="#2b3950" stroke-width="3.600" stroke-linecap="round"/><path d="M25 65c11 12 33 12 44 0" fill="none" stroke="#16202e" stroke-width="2.600" stroke-linecap="round"/><circle cx="47" cy="104" r="4" fill="#9c8fb8"/></svg>
    <!-- Launchpad -->
    <svg viewBox="0 0 94 112"><rect x="10.500" y="16" width="73" height="73" rx="17" fill="#b3b0bd"/><g><rect x="23" y="28" width="13" height="14" rx="3" fill="#7be052"/><rect x="40.500" y="28" width="13" height="14" rx="3" fill="#f5c044"/><rect x="58" y="28" width="13" height="14" rx="3" fill="#e8913a"/><rect x="23" y="46" width="13" height="14" rx="3" fill="#cf3528"/><rect x="40.500" y="46" width="13" height="14" rx="3" fill="#9ea5ab"/><rect x="58" y="46" width="13" height="14" rx="3" fill="#ea5066"/><rect x="23" y="64" width="13" height="14" rx="3" fill="#9345cf"/><rect x="40.500" y="64" width="13" height="14" rx="3" fill="#3a94f2"/><rect x="58" y="64" width="13" height="14" rx="3" fill="#62c9a6"/></g></svg>
    <!-- Firefox -->
    <svg viewBox="0 0 94 112"><use href="#firefox" x="7" y="11" width="80" height="82"/><circle cx="47" cy="104" r="4" fill="#9c8fb8"/></svg>
    <!-- Messages -->
    <svg viewBox="0 0 94 112"><rect x="10.500" y="16" width="73" height="73" rx="17" fill="url(#gGreen)"/><ellipse cx="47" cy="51" rx="27" ry="22.500" fill="url(#gBubble)"/><path d="M34 68c0 4-2 7-5 9 6 0 11-3 13-6z" fill="#e6f3e2"/></svg>
    <!-- Mail -->
    <svg viewBox="0 0 94 112"><use href="#mail" x="10.500" y="16" width="73" height="73"/><circle cx="47" cy="104" r="4" fill="#9c8fb8"/></svg>
    <!-- Photos -->
    <svg viewBox="0 0 94 112"><rect x="10.500" y="16" width="73" height="73" rx="17" fill="#fdfdfd"/><g transform="translate(47 52.500)" class="[&>rect]:mix-blend-multiply"><rect x="-9.500" y="-31.500" width="19" height="31" rx="9.500" fill="#f7a547"/><rect x="-9.500" y="-31.500" width="19" height="31" rx="9.500" fill="#f0df48" transform="rotate(45)"/><rect x="-9.500" y="-31.500" width="19" height="31" rx="9.500" fill="#b4d65e" transform="rotate(90)"/><rect x="-9.500" y="-31.500" width="19" height="31" rx="9.500" fill="#78c6a0" transform="rotate(135)"/><rect x="-9.500" y="-31.500" width="19" height="31" rx="9.500" fill="#7bb4e2" transform="rotate(180)"/><rect x="-9.500" y="-31.500" width="19" height="31" rx="9.500" fill="#9c94d2" transform="rotate(225)"/><rect x="-9.500" y="-31.500" width="19" height="31" rx="9.500" fill="#cb84ba" transform="rotate(270)"/><rect x="-9.500" y="-31.500" width="19" height="31" rx="9.500" fill="#ee6a56" transform="rotate(315)"/></g></svg>
    <!-- Calendar -->
    <svg viewBox="0 0 94 112"><rect x="10.500" y="16" width="73" height="73" rx="17" fill="#f7f6f3"/><path d="M10.500 38.500V33a17 17 0 0 1 17-17h39a17 17 0 0 1 17 17v5.500z" fill="#e2574c"/><text x="47" y="33.500" text-anchor="middle" font-family="Inter" font-weight="600" font-size="14" fill="#fff" textLength="33">AVR.</text><text x="47.500" y="77" text-anchor="middle" font-family="Inter" font-weight="300" font-size="44" fill="#2a2a2a">9</text></svg>
    <!-- Notes -->
    <svg viewBox="0 0 94 112"><rect x="10.500" y="16" width="73" height="73" rx="17" fill="#f2f1ed"/><path d="M10.500 35v-2a17 17 0 0 1 17-17h39a17 17 0 0 1 17 17v2z" fill="#f8cf4b"/><path d="M11 35h72M11 52.500h72M11 71h72" stroke="#cfcdc8" stroke-width="1.200"/><path d="M12 38h70" stroke="#a9a7a2" stroke-width="1.600" stroke-dasharray="1.300 1.300"/></svg>
    <!-- App Store -->
    <svg viewBox="0 0 94 112"><rect x="10.500" y="16" width="73" height="73" rx="17" fill="url(#gStore)"/><g stroke="#f3f8fe" stroke-width="6.400" stroke-linecap="round"><path d="M51 33L36 60M32 69l-2 3M43 33l23 39M25 60h27M63 60h6"/></g></svg>
    <!-- System preferences -->
    <svg viewBox="0 0 94 112"><rect x="10.500" y="16" width="73" height="73" rx="17" fill="url(#gGrey)"/><circle cx="47" cy="52.500" r="31" fill="#262626"/><circle cx="47" cy="52.500" r="29.500" fill="none" stroke="#b5b5b5" stroke-width="1"/><circle cx="47" cy="52.500" r="27" fill="none" stroke="#9c9c9c" stroke-width="4" stroke-dasharray="1.600 1.200"/><circle cx="47" cy="52.500" r="23" fill="none" stroke="#aeb0b0" stroke-width="3.400"/><circle cx="47" cy="52.500" r="14" fill="#4b4b4b" stroke="#777" stroke-width="4" stroke-dasharray="2 1.500"/><path d="M47 52.500h22M47 52.500L35.500 33M47 52.500L35.500 72" stroke="#b9bcbc" stroke-width="4"/><circle cx="47" cy="52.500" r="3" fill="#777"/></svg>
    <!-- Cyberduck -->
    <svg viewBox="0 0 94 112"><rect x="10.500" y="16" width="73" height="73" rx="17" fill="#f5d142"/><path d="M36 17c8-1 17-4 24-8 2 3 2 6 2 9z" fill="#f7d647"/><path d="M50 17c-4 6-3 12-3 22" stroke="#dfb838" fill="none"/><ellipse cx="32" cy="45" rx="6.500" ry="6.500" fill="#fff"/><ellipse cx="61.500" cy="45" rx="6.500" ry="6.500" fill="#fff"/><circle cx="33" cy="45.500" r="3" fill="#251b10"/><circle cx="61" cy="45.500" r="3" fill="#251b10"/><path d="M30 76c10 8 26 8 34 0-8-6-26-6-34 0z" fill="#d9a52e" opacity=".6"/><path d="M27 66c6-2 12-13 20-13s14 11 20 13c-4 8-34 10-40 0z" fill="#ee8334"/><path d="M27 66c10 3 30 3 40 0-4 9-36 10-40 0z" fill="#dc5d2a"/></svg>
    <!-- Chrome -->
    <svg viewBox="0 0 94 112"><rect x="10.500" y="16" width="73" height="73" rx="17" fill="#f4f4f6"/><circle cx="47" cy="52.500" r="31.500" fill="#f0bd45"/><path d="M47 52.500L19.700 36.700a31.500 31.500 0 0 0 27.300 47.300l14-24z" fill="#52a258"/><path d="M47 52.500L19.700 36.700C26 26 36 21 47 21c12 0 22 6 27.300 15.700z" fill="#d84d3e"/><path d="M47 37h27.300a31.500 31.500 0 0 1-27.300 47l14-24z" fill="#f0bd45"/><path d="M19.700 36.700L33.500 60.500 47 52.500 42 38z" fill="#d84d3e"/><path d="M19.700 36.700a31.500 31.500 0 0 0 27.300 47.300L61 60l-27.500.500z" fill="#52a258"/><circle cx="47" cy="52.500" r="15" fill="#fff"/><circle cx="47" cy="52.500" r="12" fill="#4479e3"/><circle cx="47" cy="104" r="4" fill="#9c8fb8"/></svg>
    <!-- MAMP -->
    <svg viewBox="0 0 94 112"><use href="#elephant" x="2.500" y="8" width="90" height="90"/><circle cx="47" cy="104" r="4" fill="#9c8fb8"/></svg>
    <!-- VS Code -->
    <svg viewBox="0 0 94 112"><use href="#vscode" x="10.500" y="16" width="73" height="73"/><circle cx="47" cy="104" r="4" fill="#9c8fb8"/></svg>
    <!-- Photoshop -->
    <svg viewBox="0 0 94 112"><rect x="5" y="9" width="84" height="83" rx="16" fill="#071d33"/><text x="47" y="67.500" text-anchor="middle" font-family="Open Sans" font-weight="bold" font-size="50" textLength="54" lengthAdjust="spacingAndGlyphs" fill="#54a8fb">Ps</text></svg>
    <!-- GitHub Desktop -->
    <svg viewBox="0 0 94 112"><rect x="10.500" y="16" width="73" height="73" rx="17" fill="url(#gGit)"/><path transform="translate(16.500 22) scale(2.530)" fill="#f1eef4" d="M12 .297c-6.630 0-12 5.373-12 12 0 5.303 3.438 9.800 8.205 11.385.6.113.820-.258.820-.577 0-.285-.010-1.040-.015-2.040-3.338.724-4.042-1.610-4.042-1.610C4.422 18.070 3.633 17.700 3.633 17.700c-1.087-.744.084-.729.084-.729 1.205.084 1.838 1.236 1.838 1.236 1.070 1.835 2.809 1.305 3.495.998.108-.776.417-1.305.760-1.605-2.665-.3-5.466-1.332-5.466-5.930 0-1.310.465-2.380 1.235-3.220-.135-.303-.540-1.523.105-3.176 0 0 1.005-.322 3.300 1.230.960-.267 1.980-.399 3-.405 1.020.006 2.040.138 3 .405 2.280-1.552 3.285-1.230 3.285-1.230.645 1.653.240 2.873.120 3.176.765.840 1.230 1.910 1.230 3.220 0 4.610-2.805 5.625-5.475 5.920.420.360.810 1.096.810 2.220 0 1.606-.015 2.896-.015 3.286 0 .315.210.690.825.570C20.565 22.092 24 17.592 24 12.297c0-6.627-5.373-12-12-12"/></svg>
    <!-- VNC Viewer -->
    <svg viewBox="0 0 94 112"><rect x="7.500" y="13" width="79" height="79" rx="7" fill="#529cf0"/><path d="M19 29l16 44c1 3 3 3 4 0l12-44M55 50V39c0-12 19-12 19 0v11M75 56H64c-11 0-11 19 0 19h11" fill="none" stroke="#fff" stroke-width="4.200"/></svg>
    <!-- Screen recorder -->
    <svg viewBox="0 0 94 112"><rect x="7" y="13" width="80" height="80" rx="17" fill="#8bc6f8"/><circle cx="32.500" cy="44.500" r="14.500" fill="#fff"/><rect x="26" y="37" width="38" height="33" rx="3" fill="none" stroke="#152334" stroke-width="2"/><circle cx="46" cy="70" r="6.500" fill="#fff"/><circle cx="56" cy="45.500" r="2.500" fill="#fff"/><path d="M75 45c-9 2-9 17 0 19z" fill="none" stroke="#152334" stroke-width="2"/></svg>
    <!-- Raspberry Pi Imager -->
    <svg viewBox="0 0 94 112"><use href="#pi" x="12" y="8" width="70" height="90"/></svg>
    <!-- Target -->
    <svg viewBox="0 0 94 112"><circle cx="47" cy="53" r="38.500" fill="#d8b4d4" opacity=".35"/><circle cx="47" cy="53" r="36.500" fill="#150b0d" stroke="#b7988c" stroke-width="2"/><ellipse cx="47" cy="37" rx="27" ry="18" fill="#8f736b" opacity=".75"/><ellipse cx="47" cy="72" rx="26" ry="15" fill="#4a3530" opacity=".8"/><path d="M9 53h76" stroke="#150b0d" stroke-width="8" opacity=".5"/><path d="M47 19v68M12 53h70M27 47v12M38 47v12M57 47v12M67 47v12M40 32h14M40 44h14M40 62h14M40 74h14" stroke="#c9aea4" stroke-width="2.400"/></svg>
    </div>
    <i class="relative w-[2px] h-[84px] mt-[14px] mx-[20px] bg-[#7b539a]"></i>
    <div class="relative flex [&>svg]:w-[94px] [&>svg]:h-[112px] [&>svg]:flex-none">
    <!-- Preview -->
    <svg viewBox="0 0 94 112"><rect x="10.500" y="16" width="73" height="73" rx="15" fill="#ecebe9"/><rect x="16" y="22" width="62" height="61" rx="10" fill="url(#gSky)"/><path d="M16 56h62v12H16z" fill="#2d4b83"/><path d="M16 66h62v8c0 5-4 9-10 9H26c-6 0-10-4-10-9z" fill="#b7c5cf"/><path d="M16 75l8-5 10 8 10-4 6 9H26c-6 0-10-3-10-8z" fill="#6d6150"/><path d="M50 66h28l8 25c-8 4-34 4-42 0z" fill="#d5d9d8" opacity=".95"/><path d="M56 72l6 4-5 8zM66 74l6-3 4 10-8 3z" fill="#8793a0"/><rect x="48" y="53" width="33" height="15" rx="4" fill="#191919"/><ellipse cx="64.500" cy="54.500" rx="16" ry="3.500" fill="#3a3a3a"/></svg>
    <!-- Teams -->
    <svg viewBox="0 0 94 112"><rect x="10.500" y="16" width="73" height="73" rx="17" fill="#fff"/><circle cx="64.500" cy="38" r="6" fill="#5059c9"/><path d="M56 47h17v15c0 14-17 14-17 0z" fill="#5059c9"/><circle cx="48" cy="36" r="8" fill="#7b83eb"/><path d="M35 47h26v18c0 16-26 16-26 0z" fill="#7b83eb"/><rect x="19.500" y="39" width="27" height="27" rx="2.500" fill="#474fb8"/><text x="33" y="60" text-anchor="middle" font-family="Open Sans" font-weight="bold" font-size="21" fill="#fff">T</text></svg>
    <!-- Acrobat -->
    <svg viewBox="0 0 94 112"><rect x="10.500" y="16" width="73" height="73" rx="17" fill="#a62518"/><path d="M46 32c5-1 5 8 2 17-4 11-11 24-17 24-6-2-2-9 9-13 10-4 22-6 27-4 6 3 2 8-4 6-9-2-18-12-20-21-1-5 0-9 3-9z" fill="none" stroke="#fff" stroke-width="3.400"/><circle cx="47" cy="104" r="4" fill="#b58ad8"/></svg>
    </div>
    <i class="relative w-[2px] h-[84px] mt-[14px] mx-[20px] bg-[#6b4e94]"></i>
    <div class="relative flex [&>svg]:w-[94px] [&>svg]:h-[112px] [&>svg]:flex-none [&>svg]:overflow-visible">
    <!-- Minimised MAMP window -->
    <svg viewBox="0 0 94 112"><rect x="5" y="19" width="84" height="68" fill="#232227"/><rect x="5" y="19" width="84" height="11" fill="#37353b"/><circle cx="8" cy="21.500" r="1" fill="#e66"/><circle cx="11" cy="21.500" r="1" fill="#ec4"/><path d="M43 21h8M9 27h6M64 27h3M74 27h3M83 27h3" stroke="#888" stroke-width="1.500"/><path d="M30 35h53v5H30zM30 44h53v7H30z" fill="#333238"/><path d="M20 37h8M14 45.500h14M32 45.500h30M18 57h9M32 57h6M43 57h9M17 65h10" stroke="#a5a5a9" stroke-width="1.300" stroke-dasharray="3 .8"/><rect x="30" y="63" width="16" height="4" fill="#77777c"/><rect x="5" y="72" width="84" height="15" fill="#4b9bca"/><path d="M8 85l6-8c4-5 8-6 12-6-1 5-3 8-8 12z" fill="#f3ede8"/><path d="M5 87l3-8 4 4z" fill="#f29a38"/><path d="M10 76l4 1-3 4zM16 86l3-6 1 4z" fill="#d24735"/><text x="27" y="83" font-family="Roboto" font-size="9" textLength="30" lengthAdjust="spacingAndGlyphs" fill="#d9ecf7">MAMP PRO 6</text><use href="#elephant" x="57.500" y="63" width="33" height="33"/></svg>
    <!-- Minimised Mail window -->
    <svg viewBox="0 0 94 112"><rect x="5" y="30" width="84" height="46" fill="#1e1d23"/><path d="M5 30h84v3H5z" fill="#37353c"/><path d="M5 33h13v43H5z" fill="#2b2a35"/><path d="M18 33h21v5H18z" fill="#56555b"/><path d="M7 37h8M7 42h7M7 45h9M7 50h7M7 54h8M7 59h7M7 64h8M19 40h18M19 43h15M19 47h18M19 51h16M19 55h18M19 59h15M19 63h18M19 67h17M19 71h18" stroke="#55545c" stroke-width="1"/><path d="M42 36h10M78 36h8" stroke="#88878e"/><path d="M43 41l5 0-1 5h-3z" fill="#e5c3b0"/><use href="#mail" x="60" y="66" width="27" height="27"/></svg>
    <!-- Minimised VS Code window -->
    <svg viewBox="0 0 94 112"><rect x="5" y="30" width="84" height="46" fill="#272822"/><path d="M5 30h84v2H5z" fill="#3c3b35"/><path d="M5 32h20v43H5z" fill="#1e1f1c"/><path d="M8 35h10M10 39h9M10 43h10M12 47h8M10 51h10M12 55h7M10 59h9M12 63h6M10 67h8M10 71h9" stroke="#66665c" stroke-width="1"/><path d="M27 34h12M42 34h14" stroke="#8a8a7c"/><path d="M38 36h32M38 40h6M35 50h14M35 54h36M35 57h20" stroke="#8b883f" stroke-width="1.200"/><path d="M38 36l-6 18M34 44l-4 8" stroke="#a93b5c"/><path d="M83 34v26" stroke="#55532f" stroke-width="5" stroke-dasharray="3 1"/><use href="#vscode" x="60" y="66" width="27" height="27"/></svg>
    <!-- Minimised Firefox window -->
    <svg viewBox="0 0 94 112"><rect x="5" y="30" width="84" height="46" fill="#fdfdfd"/><path d="M5 30h84v6H5z" fill="#25242c"/><path d="M8 34h20M36 34h20M60 34h24" stroke="#55545d"/><path d="M11 42h6M11 46h5M11 51h6M11 55h6M11 60h5M75 40h6M75 44h8M75 48h6" stroke="#8b8b90"/><path d="M25 39h46" stroke="#bbb"/><rect x="26" y="43" width="9" height="3.500" fill="#3278ee"/><path d="M25 49h44v21H25z" fill="#f1f2f5"/><path d="M27 52h36M29 56h25M29 60h30M29 64h14" stroke="#7d9fc9" stroke-dasharray="7 2"/><path d="M33 54h20M31 58h15" stroke="#e28a8a" stroke-dasharray="4 4"/><use href="#firefox" x="58" y="63" width="31" height="33"/></svg>
    <!-- Trash -->
    <svg viewBox="0 0 94 112"><path d="M15 19l6-7 7-1 5-3 7 4 7-3 7 2 8-1 6 4 6 3 5 9-16 8H26z" fill="#e8e6e2"/><path d="M22 14l7 9M38 12l-5 10M48 11l6 9M63 13l-4 10M70 17l-8 7" stroke="#5c5854" stroke-width="1.600"/><path d="M38 17h5v5h-5z" fill="#4fb6d9"/><path d="M49 19l5-4 3 8z" fill="#c2502f"/><path d="M15 18c8 10 56 10 64 0l-8 68c-2 8-46 8-48 0z" fill="url(#gBin)"/><path d="M23 84c2 9 46 9 48 0" stroke="#b9bcbd" stroke-width="1.500" fill="none"/><path d="M15 18c8 10 56 10 64 0" stroke="#b5b8b9" stroke-width="1.500" fill="none"/></svg>
    </div>
  </div>
</footer>
</div>
</body>
</html>
